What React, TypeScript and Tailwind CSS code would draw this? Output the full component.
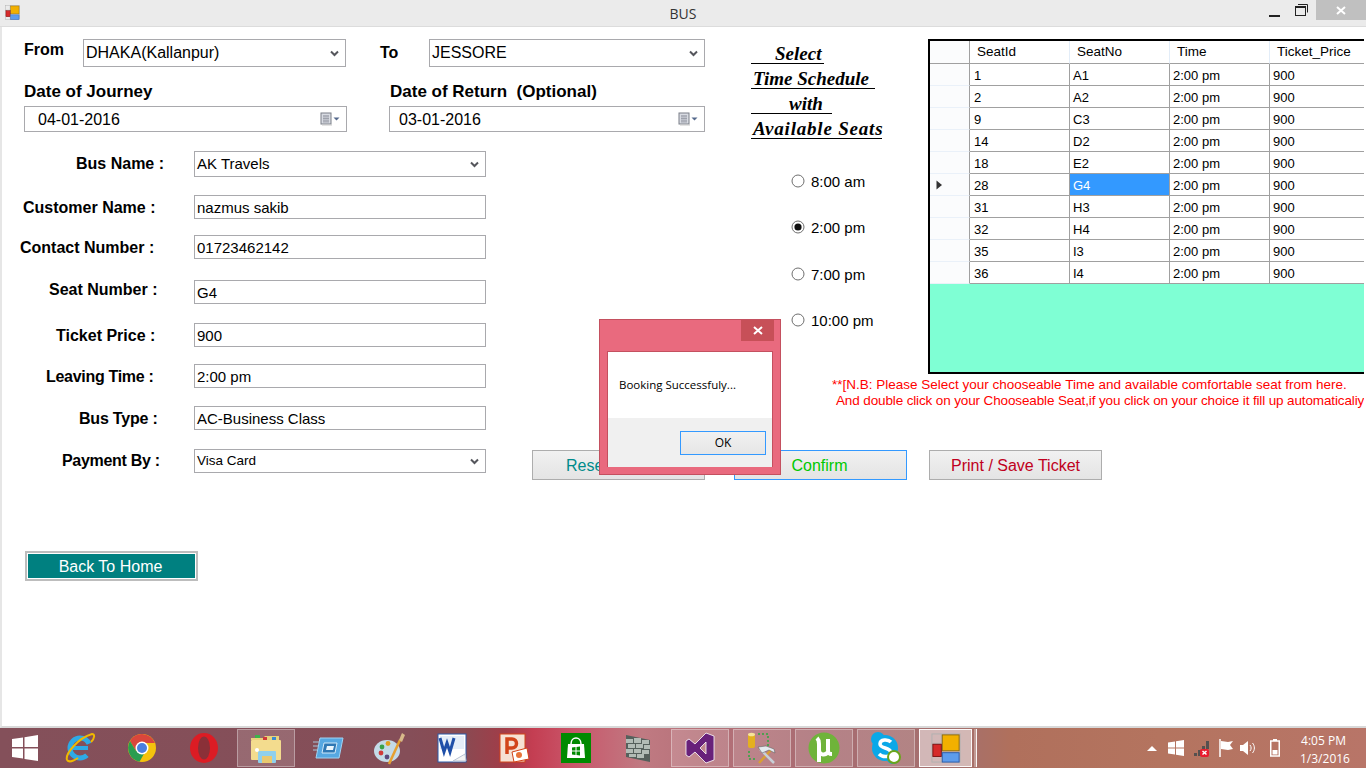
import React from "react";

const Chevron = () => (
  <svg width="9" height="7" viewBox="0 0 9 7" className="shrink-0">
    <path d="M1 1.5 L4.5 5 L8 1.5" fill="none" stroke="#55565c" strokeWidth="2" />
  </svg>
);

const Combo = ({ text, cls, textCls = "text-[16px]" }: { text: string; cls: string; textCls?: string }) => (
  <div className={`flex items-center justify-between border border-[#a9a9ad] bg-white pl-[2px] pr-[6px] ${cls}`}>
    <span className={`text-black ${textCls}`}>{text}</span>
    <Chevron />
  </div>
);

const DatePick = ({ text, cls, pad }: { text: string; cls: string; pad: string }) => (
  <div className={`flex items-center justify-between border border-[#a9a9ad] bg-white pr-[6px] ${cls}`}>
    <span className={`pt-[2px] text-[16px] text-black ${pad}`}>{text}</span>
    <svg width="20" height="14" viewBox="0 0 20 14">
      <rect x="1" y="1" width="10" height="11" fill="#d8dbe2" stroke="#7a7f88" />
      <path d="M3 4h6M3 6.5h6M3 9h6M4 3v8M6 3v8M8 3v8" stroke="#8f949d" strokeWidth="0.7" />
      <path d="M2 13h10" stroke="#c9c9c9" />
      <path d="M13.5 5.5h6l-3 3z" fill="#55698c" />
    </svg>
  </div>
);

const Input = ({ text }: { text: string }) => (
  <div className="flex h-[24px] w-[292px] items-center border border-[#a9a9ad] bg-white pl-[2px] pt-[2px] text-[15px] text-black">{text}</div>
);

const rows = [
  { label: "Customer Name :", pad: "pl-[21px]", mt: "mt-[18px]", value: "nazmus sakib", labelExtra: "pt-[2px]" },
  { label: "Contact Number :", pad: "pl-[18px]", mt: "mt-[16px]", value: "01723462142", labelExtra: "pt-[2px]" },
  { label: "Seat Number :", pad: "pl-[47px]", mt: "mt-[21px]", value: "G4", labelExtra: "pb-[4px]" },
  { label: "Ticket Price :", pad: "pl-[54px]", mt: "mt-[19px]", value: "900", labelExtra: "pt-[2px]" },
  { label: "Leaving Time :", pad: "pl-[44px]", mt: "mt-[17px]", value: "2:00 pm", labelExtra: "pt-[2px] tracking-[-0.3px]" },
  { label: "Bus Type :", pad: "pl-[77px]", mt: "mt-[18px]", value: "AC-Business Class", labelExtra: "pt-[2px] tracking-[-0.2px]" },
];

const Label = ({ text, cls }: { text: string; cls: string }) => (
  <div className={`w-[192px] shrink-0 whitespace-nowrap text-[16px] font-bold leading-[18px] text-black ${cls}`}>{text}</div>
);

const seats = [
  ["1", "A1"], ["2", "A2"], ["9", "C3"], ["14", "D2"], ["18", "E2"],
  ["28", "G4"], ["31", "H3"], ["32", "H4"], ["35", "I3"], ["36", "I4"],
];

const Radio = ({ on, text, cls }: { on?: boolean; text: string; cls: string }) => (
  <div className={`flex h-[20px] items-center ${cls}`}>
    <svg width="14" height="14" viewBox="0 0 14 14" className="mr-[6px]">
      <circle cx="7" cy="7" r="6" fill="#fff" stroke="#6f6f6f" />
      {on && <circle cx="7" cy="7" r="3.6" fill="#111" />}
    </svg>
    <span className="pt-[2px] text-[15px] text-black">{text}</span>
  </div>
);

const HeadLine = ({ text, cls, pad }: { text: string; cls: string; pad: string }) => (
  <div className={`h-[22px] whitespace-nowrap border-b-[1.5px] border-black pt-[1px] text-[19px] font-bold italic leading-[22px] text-black [font-family:'Liberation_Serif',serif] ${cls} ${pad}`}>
    {text}
  </div>
);

const Slot = ({ kind = "none", children }: { kind?: "none" | "open" | "active"; children: React.ReactNode }) => {
  const c =
    kind === "open"
      ? "border border-white/35 bg-white/15"
      : kind === "active"
        ? "border border-white/90 bg-white/50"
        : "";
  return (
    <div className="flex h-[40px] w-[62px] shrink-0 items-center justify-center">
      <div className={`flex h-[38px] w-[58px] items-center justify-center ${c}`}>{children}</div>
    </div>
  );
};

const AppIcon = ({ s = 16 }: { s?: number }) => (
  <svg width={s} height={s} viewBox="0 0 32 32">
    <rect x="1" y="1" width="30" height="30" fill="none" stroke="#b0b0b0" strokeWidth="1" />
    <path d="M11 1v30M1 11h10M1 24h30" stroke="#b5b5b5" strokeWidth="1" />
    <rect x="12" y="2" width="18" height="17" fill="#f2b000" stroke="#8a6a10" />
    <rect x="2" y="12" width="9" height="13" fill="#d62a2a" stroke="#7a1010" />
    <rect x="12" y="21" width="18" height="10" fill="#5d9cec" stroke="#2a5aa8" />
  </svg>
);

export default function App() {
  return (
    <div className="relative flex h-[768px] w-[1366px] flex-col overflow-hidden bg-white font-['Liberation_Sans',Arial,sans-serif]">
      {/* title bar */}
      <div className="flex h-[27px] shrink-0 items-start border-b border-[#dcdcdc] bg-[#ebebeb]">
        <div className="w-[97px] shrink-0 pl-[5px] pt-[5px]"><AppIcon s={15} /></div>
        <div className="flex-1 pt-[5px] text-center text-[14px] leading-[17px] text-[#333] [font-family:'Open_Sans',sans-serif]">BUS</div>
        <div className="flex w-[97px] shrink-0 items-start">
          <div className="mr-[15px] mt-[15px] h-[2px] w-[11px] bg-[#222]" />
          <svg width="13" height="12" viewBox="0 0 13 12" className="mr-[8px] mt-[4px]">
            <rect x="0.5" y="2.5" width="10" height="9" fill="none" stroke="#222" />
            <path d="M0.5 3h10" stroke="#222" strokeWidth="2" />
            <path d="M3 0.5h9.5v8" fill="none" stroke="#222" />
          </svg>
          <div className="flex h-[20px] w-[50px] items-center justify-center bg-[#c0c0c0]">
            <svg width="10" height="9" viewBox="0 0 10 9"><path d="M1 1l8 7M9 1l-8 7" stroke="#fff" strokeWidth="2" /></svg>
          </div>
        </div>
      </div>

      {/* form */}
      <div className="flex h-[701px] shrink-0 border-b-2 border-l-2 border-b-[#d8d8d8] border-l-[#e6e6e6] bg-white">
        {/* left */}
        <div className="w-[728px] shrink-0 pt-[12px]">
          <div className="flex h-[28px] items-center">
            <div className="ml-[22px] w-[59px] pb-[6px] text-[16px] font-bold text-black">From</div>
            <Combo text="DHAKA(Kallanpur)" cls="h-[28px] w-[263px]" />
            <div className="ml-[34px] w-[49px] text-[16px] font-bold text-black">To</div>
            <Combo text="JESSORE" cls="h-[28px] w-[276px]" />
          </div>
          <div className="mt-[16px] flex h-[18px] items-center text-[17px] font-bold text-black">
            <div className="ml-[22px] w-[366px]">Date of Journey</div>
            <div className="whitespace-pre">Date of Return  (Optional)</div>
          </div>
          <div className="mt-[5px] flex">
            <DatePick text="04-01-2016" cls="ml-[22px] h-[26px] w-[323px]" pad="pl-[13px]" />
            <DatePick text="03-01-2016" cls="ml-[42px] h-[26px] w-[316px]" pad="pl-[9px]" />
          </div>
          <div className="flex">
            <div className="w-[484px] shrink-0">
              <div className="mt-[19px] flex items-center">
                <Label text="Bus Name :" cls="pl-[74px]" />
                <Combo text="AK Travels" cls="h-[26px] w-[292px]" textCls="text-[15px]" />
              </div>
              {rows.map((r) => (
                <div key={r.label} className={`flex items-center ${r.mt}`}>
                  <Label text={r.label} cls={`${r.pad} ${r.labelExtra}`} />
                  <Input text={r.value} />
                </div>
              ))}
              <div className="mt-[19px] flex items-center">
                <Label text="Payment By :" cls="pl-[60px] tracking-[-0.3px]" />
                <Combo text="Visa Card" cls="h-[24px] w-[292px]" textCls="text-[13.5px]" />
              </div>
            </div>
            <div className="ml-[46px] mt-[318px] flex h-[30px] w-[173px] items-center border border-[#adadad] bg-gradient-to-b from-[#f1f1f1] to-[#e4e4e4] pl-[33px] pt-[1px] text-[16px] text-[#008b8b]">Reset</div>
          </div>
          <div className="ml-[23px] mt-[71px] flex h-[30px] w-[173px] items-center justify-center border-2 border-[#bdbdbd] bg-white p-[1px]">
            <div className="flex h-full w-full items-center justify-center bg-[#008080] pr-[2px] pt-[1px] text-[16px] text-white">Back To Home</div>
          </div>
        </div>

        {/* right */}
        <div className="flex-1">
          <div className="flex items-start pt-[12px]">
            <div className="ml-[21px] w-[177px] shrink-0 pt-[3px]">
              <HeadLine text="Select" cls="w-[73px]" pad="pl-[24px]" />
              <HeadLine text="Time Schedule" cls="mt-[3px] w-[124px]" pad="pl-[2px]" />
              <HeadLine text="with" cls="mt-[3px] w-[81px]" pad="pl-[38px]" />
              <HeadLine text="Available Seats" cls="mt-[3px] w-[131px] tracking-[0.8px]" pad="pl-[2px]" />
              <Radio text="8:00 am" cls="ml-[40px] mt-[32px]" />
              <Radio on text="2:00 pm" cls="ml-[40px] mt-[26px]" />
              <Radio text="7:00 pm" cls="ml-[40px] mt-[27px]" />
              <Radio text="10:00 pm" cls="ml-[40px] mt-[26px]" />
            </div>
            <div className="h-[335px] w-[436px] shrink-0 overflow-hidden border-y-2 border-l-2 border-black bg-[#7fffd4] text-[13px] text-black">
              <div className="flex h-[23px] bg-white text-[13.5px]">
                <div className="w-[40px] shrink-0 border-b border-r border-b-[#a0a0a0] border-r-[#a0a0a0] bg-[#fbfcfd]" />
                {["SeatId", "SeatNo", "Time", "Ticket_Price"].map((h) => (
                  <div key={h} className="flex w-[100px] shrink-0 items-center border-b border-r border-b-[#a0a0a0] border-r-[#e3edf8] pl-[7px] pt-[1px]">{h}</div>
                ))}
              </div>
              {seats.map(([id, no]) => {
                const sel = no === "G4";
                return (
                  <div key={no} className="flex h-[22px]">
                    <div className="flex w-[40px] shrink-0 items-center border-b border-r border-b-[#eaf1f9] border-r-[#a0a0a0] bg-[#fbfcfd] pl-[6px]">
                      {sel && <svg width="7" height="10" viewBox="0 0 7 10"><path d="M0.5 0.5L6 5L0.5 9.5z" fill="#333" /></svg>}
                    </div>
                    <div className="flex w-[100px] shrink-0 items-center border-b border-r border-[#a0a0a0] bg-white pl-[4px] pt-[3px]">{id}</div>
                    <div className={`flex w-[100px] shrink-0 items-center border-b border-r border-[#a0a0a0] pl-[3px] pt-[3px] ${sel ? "bg-[#3399ff] text-white" : "bg-white"}`}>{no}</div>
                    <div className="flex w-[100px] shrink-0 items-center border-b border-r border-[#a0a0a0] bg-white pl-[3px] pt-[3px]">2:00 pm</div>
                    <div className="flex w-[100px] shrink-0 items-center border-b border-r border-[#a0a0a0] bg-white pl-[3px] pt-[3px]">900</div>
                  </div>
                );
              })}
            </div>
          </div>
          <div className="ml-[102px] mt-[3px] w-[532px] overflow-hidden whitespace-nowrap text-[13.5px] leading-[16px] text-[#ff0000]">
            <div>**[N.B: Please Select your chooseable Time and available comfortable seat from here.</div>
            <div className="pl-[4px] tracking-[-0.13px]">And double click on your Chooseable Seat,if you click on your choice it fill up automaticaliy</div>
          </div>
          <div className="mt-[41px] flex">
            <div className="ml-[4px] flex h-[30px] w-[173px] items-center justify-center border border-[#3399ff] bg-gradient-to-b from-[#f1f1f1] to-[#e4e4e4] pr-[2px] pt-[1px] text-[16px] text-[#00c800]">Confirm</div>
            <div className="ml-[22px] flex h-[30px] w-[173px] items-center justify-center border border-[#adadad] bg-gradient-to-b from-[#f1f1f1] to-[#e4e4e4] pt-[1px] text-[16px] text-[#c00020]">Print / Save Ticket</div>
          </div>
        </div>
      </div>

      {/* taskbar */}
      <div className="flex h-[40px] shrink-0 items-center bg-[linear-gradient(90deg,#84505a_0%,#854e58_30%,#8a4a52_34%,#a23c48_37%,#c43e52_39%,#c9566a_42%,#c07a82_47%,#b47078_52%,#a86c72_60%,#a4706e_70%,#b0705c_74%,#b4745f_85%,#b87568_100%)]">
        <div className="flex w-[49px] shrink-0 justify-center">
          <svg width="26" height="26" viewBox="0 0 26 26"><path d="M0 4l11-1.6V12H0zM12.5 2.2L26 0v12H12.5zM0 13.5h11v10L0 22zM12.5 13.5H26V26l-13.5-2z" fill="#fff" /></svg>
        </div>
        <Slot>
          <svg width="32" height="32" viewBox="0 0 32 32">
            <circle cx="16" cy="16" r="10" fill="none" stroke="#2eaae6" strokeWidth="5" strokeDasharray="50 13" strokeDashoffset="-8" />
            <path d="M8 16h16" stroke="#2eaae6" strokeWidth="4" />
            <path d="M3 28C1 22 14 6 28 2c3 0 3 4-1 8M3 28c2 3 8 0 11-2" fill="none" stroke="#f0b800" strokeWidth="2" />
          </svg>
        </Slot>
        <Slot>
          <svg width="30" height="30" viewBox="0 0 30 30">
            <circle cx="15" cy="15" r="14" fill="#f4c20d" />
            <path d="M15 1A14 14 0 0 0 3 8l6 10 6-8h13A14 14 0 0 0 15 1z" fill="#d9463c" />
            <path d="M3 8a14 14 0 0 0 9.5 20.8L18 19l-9-1z" fill="#2a9d50" />
            <circle cx="15" cy="15" r="6.5" fill="#fff" />
            <circle cx="15" cy="15" r="5" fill="#4a7fe0" />
          </svg>
        </Slot>
        <Slot>
          <svg width="30" height="32" viewBox="0 0 30 32">
            <ellipse cx="15" cy="16" rx="14" ry="15" fill="#dc1c24" />
            <ellipse cx="15" cy="16" rx="6" ry="11.5" fill="#8a3038" />
          </svg>
        </Slot>
        <Slot kind="open">
          <svg width="32" height="32" viewBox="0 0 32 32">
            <path d="M1 6h12l2-2h14v4H1z" fill="#e8d27a" />
            <rect x="5" y="3" width="5" height="3" fill="#3cb34a" />
            <rect x="13" y="5" width="4" height="3" fill="#d03a3a" />
            <rect x="22" y="5" width="4" height="3" fill="#3a8ad0" />
            <rect x="1" y="8" width="30" height="20" rx="1" fill="#f3dc8e" />
            <rect x="8" y="19" width="18" height="12" rx="1" fill="#8fd0ec" />
            <rect x="12" y="24" width="10" height="7" fill="#e9c96f" />
            <circle cx="7" cy="18" r="2" fill="#fff" />
          </svg>
        </Slot>
        <Slot>
          <svg width="32" height="24" viewBox="0 0 32 24">
            <path d="M8 2h23l-4 20H4z" fill="#56a8e2" stroke="#9fd3f3" />
            <path d="M12 7h13l-2 10H10z" fill="#2f78b4" stroke="#cfe8f9" />
            <path d="M15 10h7l-1 4h-7z" fill="#eaf5fc" />
            <path d="M1 6h6M1 10h5M1 14h4" stroke="#a7c7dc" />
          </svg>
        </Slot>
        <Slot>
          <svg width="32" height="34" viewBox="0 0 32 34">
            <ellipse cx="13" cy="20" rx="13" ry="11" fill="#c4dbe8" />
            <circle cx="7" cy="22" r="2.4" fill="#d03a3a" />
            <circle cx="8" cy="16" r="2.4" fill="#3aa24a" />
            <circle cx="14" cy="12.5" r="2.4" fill="#e0a020" />
            <circle cx="13" cy="26" r="2.4" fill="#5a4a80" />
            <path d="M15 33L26 9" stroke="#e6a030" strokeWidth="2.5" />
            <path d="M25 9l3-7 3 2-3 7z" fill="#d8b98a" />
          </svg>
        </Slot>
        <Slot>
          <svg width="30" height="30" viewBox="0 0 30 30">
            <rect x="1" y="1" width="28" height="28" fill="#fff" stroke="#2a5aa8" />
            <rect x="3" y="3" width="24" height="13" fill="#e4edf8" />
            <path d="M3 5l4 14 3-9 3 9 4-14" fill="none" stroke="#1f4fa8" strokeWidth="3" />
            <path d="M16 28l12-7 1 7z" fill="#f4f4f4" stroke="#b9c3d4" />
          </svg>
        </Slot>
        <Slot>
          <svg width="30" height="30" viewBox="0 0 30 30">
            <rect x="1" y="1" width="25" height="28" fill="#f6e1d4" stroke="#d2441a" />
            <path d="M8 21V6h5a4 4 0 0 1 0 9H8" fill="none" stroke="#d2441a" strokeWidth="3.5" />
            <path d="M13 19l15-4 2 11-15 3z" fill="#fff" stroke="#d2441a" />
            <circle cx="20" cy="22" r="3" fill="#e8743a" />
          </svg>
        </Slot>
        <Slot>
          <svg width="30" height="30" viewBox="0 0 30 30">
            <rect width="30" height="30" fill="#008a00" />
            <path d="M7 11h16l1 14H6z" fill="#fff" />
            <path d="M10 11c0-8 10-8 10 0" fill="none" stroke="#fff" strokeWidth="1.5" />
            <path d="M11 14.5l3.5-.5v3.5H11zM15.5 14l3.5-.5v4h-3.5zM11 18.5h3.5V22L11 21.5zM15.5 18.5H19v4l-3.5-.5z" fill="#008a00" />
          </svg>
        </Slot>
        <Slot>
          <svg width="30" height="30" viewBox="0 0 30 30">
            <path d="M3 2l24 5v22L3 24z" fill="#55605c" />
            <path d="M3 6h7v4H3zM11 5h7v5h-7zM19 7h7v4h-7zM5 11h7v4H5zM13 11h7v4h-7zM21 12h6v4h-6zM3 16h7v4H3zM11 16h7v4h-7zM19 17h7v4h-7zM6 21h7v3H6zM14 21h7v4h-7z" fill="#b2bcb6" />
          </svg>
        </Slot>
        <Slot kind="open">
          <svg width="30" height="32" viewBox="0 0 30 32">
            <path d="M21 1l8 3v24l-8 3-11-11-6 5-3-2V9l3-2 6 5zM21 10l-6 6 6 6z" fill="#68217a" stroke="#fff" strokeWidth="0.8" />
          </svg>
        </Slot>
        <Slot kind="open">
          <svg width="32" height="34" viewBox="0 0 32 34">
            <rect x="2" y="3" width="7" height="14" rx="2" fill="#e4b020" />
            <ellipse cx="5.5" cy="3.5" rx="3.5" ry="1.8" fill="#f6e49a" />
            <path d="M12 3h10v12M3 20v8h8" fill="none" stroke="#2fa83f" strokeWidth="1.5" strokeDasharray="2 2" />
            <path d="M13 32l12-13" stroke="#d9a033" strokeWidth="2.5" />
            <path d="M14 18l14 14" stroke="#c8d0d8" strokeWidth="2.5" />
            <path d="M12 16l8-1 8 3 1 4-6-3-7 3z" fill="#e4eaef" stroke="#555" strokeWidth="0.5" />
          </svg>
        </Slot>
        <Slot kind="open">
          <svg width="32" height="36" viewBox="0 0 32 36">
            <circle cx="16" cy="18" r="15.5" fill="#6fb33a" />
            <path d="M9 8c1 1 2 3 2 6v6c0 5 6 6 9 2M20 9v11c0 3 1 4 4 4" fill="none" stroke="#fff" strokeWidth="4" />
            <path d="M11 20v12" stroke="#fff" strokeWidth="4" />
          </svg>
        </Slot>
        <Slot kind="open">
          <svg width="32" height="34" viewBox="0 0 32 34">
            <circle cx="15" cy="17" r="13" fill="#0aa8e8" />
            <circle cx="8" cy="8" r="7" fill="#0aa8e8" />
            <circle cx="23" cy="26" r="7" fill="#0aa8e8" />
            <path d="M21 11c-3-3-11-3-11 2 0 5 11 3 11 9 0 4-8 5-12 1" fill="none" stroke="#fff" strokeWidth="3.5" />
            <circle cx="24" cy="26" r="6" fill="#fff" stroke="#6aa51a" strokeWidth="2" />
          </svg>
        </Slot>
        <div className="flex h-[40px] w-[62px] shrink-0 items-center">
          <div className="ml-[2px] flex h-[38px] w-[53px] items-center justify-center border border-white/90 bg-white/50"><AppIcon s={30} /></div>
          <div className="ml-[2px] h-[38px] w-[3px] border-r border-white/90 bg-white/30" />
        </div>

        {/* tray */}
        <div className="ml-auto flex items-center text-white">
          <svg width="10" height="6" viewBox="0 0 10 6" className="mr-[11px]"><path d="M0 6L5 1l5 5z" fill="#fff" /></svg>
          <svg width="16" height="16" viewBox="0 0 16 16" className="mr-[9px]"><path d="M0 2.5L7 1.4V7.4H0zM8 1.2L16 0v7.4H8zM0 8.6h7v6L0 13.5zM8 8.6h8V16l-8-1.2z" fill="#fff" /></svg>
          <svg width="18" height="17" viewBox="0 0 18 17" className="mr-[8px]">
            <path d="M1 13h3v3H1zM5 10h3v6H5zM9 6h3v4H9zM13 1h3v8h-3z" fill="#55504f" />
            <rect x="7" y="9" width="9" height="8" rx="2" fill="#e81c2e" />
            <path d="M9.5 11l4 3.5M13.5 11l-4 3.5" stroke="#fff" strokeWidth="1.5" />
          </svg>
          <svg width="15" height="18" viewBox="0 0 15 18" className="mr-[6px]">
            <path d="M1 0v18" stroke="#fff" strokeWidth="1.5" />
            <path d="M2 2l7 1 5-1-3 4 3 4-5 1-7-1z" fill="#fff" />
          </svg>
          <svg width="15" height="16" viewBox="0 0 15 16" className="mr-[15px]">
            <path d="M0 5h3l5-4v14l-5-4H0z" fill="#fff" />
            <path d="M10 5c1.5 2 1.5 4 0 6M12.5 3c2.5 3 2.500 7 0 10" fill="none" stroke="#fff" />
          </svg>
          <svg width="10" height="18" viewBox="0 0 10 18" className="mr-[20px]">
            <rect x="0.75" y="2" width="8.5" height="15" fill="none" stroke="#fff" strokeWidth="1.5" />
            <rect x="3" y="0" width="4" height="2" fill="#fff" />
            <rect x="2.5" y="11" width="5" height="4.5" fill="#fff" />
          </svg>
          <div className="mr-[19px] w-[47px] whitespace-nowrap pt-[4px] text-center text-[12px] leading-[18px] [font-family:'Open_Sans',sans-serif]">
            <div>4:05 PM</div>
            <div>1/3/2016</div>
          </div>
        </div>
      </div>

      {/* message box */}
      <div className="absolute left-[599px] top-[319px] h-[156px] w-[182px] border border-[#c4505f] bg-[#e96a7e]">
        <div className="flex h-[31px] justify-end pr-[6px]">
          <div className="flex h-[21px] w-[33px] items-center justify-center bg-[#c75058]">
            <svg width="10" height="9" viewBox="0 0 10 9"><path d="M1 1l8 7M9 1l-8 7" stroke="#fff" strokeWidth="2" /></svg>
          </div>
        </div>
        <div className="mx-[7px] h-[116px] border border-[#c4505f] bg-white">
          <div className="h-[66px] pl-[11px] pt-[25px] text-[11.5px] leading-[16px] text-black [font-family:'Open_Sans',sans-serif]">Booking Successfuly...</div>
          <div className="flex h-[49px] justify-end bg-[#f0f0f0] pr-[6px] pt-[13px]">
            <div className="flex h-[24px] w-[86px] items-center justify-center border border-[#3399ff] bg-gradient-to-b from-[#f1f1f1] to-[#e6e6e6] text-[12px] text-black [font-family:'Open_Sans',sans-serif]">OK</div>
          </div>
        </div>
      </div>
    </div>
  );
}
